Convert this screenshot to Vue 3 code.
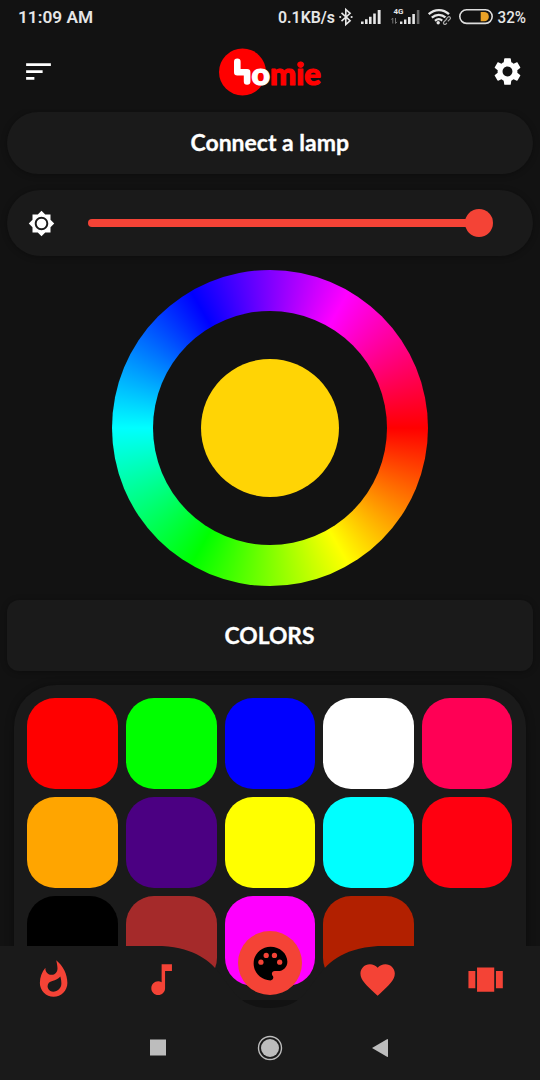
<script setup>
const swatches = [
  '#ff0000', '#00ff00', '#0000ff', '#ffffff', '#ff0055',
  '#ffa500', '#4b0082', '#ffff00', '#00ffff', '#ff0010',
  '#000000', '#a52a2a', '#ff00ff', '#b22000'
]
const tabs = [
  { name: 'hot', d: 'M13.5.67s.74 2.65.74 4.8c0 2.06-1.35 3.73-3.41 3.73-2.07 0-3.63-1.67-3.63-3.73l.03-.36C5.21 7.51 4 10.62 4 14c0 4.42 3.58 8 8 8s8-3.58 8-8C20 8.61 17.41 3.8 13.5.67zM11.71 19c-1.78 0-3.22-1.4-3.22-3.14 0-1.62 1.05-2.76 2.81-3.12 1.77-.36 3.6-1.21 4.62-2.58.39 1.29.59 2.65.59 4.04 0 2.65-2.15 4.8-4.8 4.8z' },
  { name: 'music', d: 'M12 3v10.55c-.59-.34-1.27-.55-2-.55-2.21 0-4 1.79-4 4s1.79 4 4 4 4-1.79 4-4V7h4V3h-6z' },
  { name: 'palette', d: '' },
  { name: 'favorite', d: 'M12 21.35l-1.45-1.32C5.4 15.36 2 12.28 2 8.5 2 5.42 4.42 3 7.5 3c1.74 0 3.41.81 4.5 2.09C13.09 3.81 14.76 3 16.5 3 19.58 3 22 5.42 22 8.5c0 3.78-3.4 6.86-8.55 11.54L12 21.35z' },
  { name: 'carousel', d: 'M7 19h10V5H7v14zm-5-2h4V7H2v10zM18 7v10h4V7h-4z' }
]
</script>

<template>
  <div class="screen">
    <header class="status">
      <svg class="clock" width="80" height="34">
        <text x="0" y="23" textLength="75" lengthAdjust="spacingAndGlyphs">11:09 AM</text>
      </svg>
      <svg class="indicators" width="252" height="34" viewBox="278 0 252 34">
        <text x="278" y="22.500" class="rate" textLength="57" lengthAdjust="spacingAndGlyphs">0.1KB/s</text>
        <path class="line" d="M341.500 12.800l8.600 7.900-4.300 3.800V9.500l4.300 3.800-8.600 7.900" />
        <circle cx="340.200" cy="17" r="1.100" />
        <circle cx="351.600" cy="17" r="1.100" />
        <path d="M361 21.500h2.600V24H361zM365 19.300h2.600V24H365zM369 16.800h2.600V24H369zM373.200 13.500h2.600V24h-2.600zM377.700 10h2.900v14h-2.900z" />
        <text x="393.500" y="14.200" class="tiny" textLength="10" lengthAdjust="spacingAndGlyphs">4G</text>
        <path class="dim" d="M392.800 23.500V18l-1.500 1.600M395.500 18v5.500l1.500-1.600" />
        <path d="M400 21.500h2.400V24H400zM404 19.500h2.400V24H404zM408 17h2.600v7H408zM412.300 14h2.600v10h-2.600z" />
        <path class="off" d="M416.800 10h2.600v14h-2.600z" />
        <path class="wave" d="M428.700 14.200c6-5.500 14.500-5.500 20.300 0M431.800 17.700c4.200-3.800 9.800-3.800 14 0M435 20.800c2.400-2.100 5.100-2.100 7.500 0" />
        <circle cx="438.200" cy="22.700" r="1.700" />
        <path class="halo" d="M444.500 22.500l4-4" />
        <path class="link" d="M445.800 19.300l2.200-2.200c1.400-1.200 3.300.7 2 2.100l-2.200 2.200M447 18.800l-3.200 3.200c-1.200 1.400.7 3.300 2.100 2l1-1" />
        <rect x="459.800" y="9.800" width="32.400" height="13.600" rx="6.800" class="shell" />
        <path class="charge" d="M480.700 12h3.500a4.600 4.600 0 0 1 0 9.300h-3.500z" />
        <text x="497.500" y="23" class="percent" textLength="28.500" lengthAdjust="spacingAndGlyphs">32%</text>
      </svg>
    </header>

    <div class="appbar">
      <svg class="sort" width="33" height="33" viewBox="0 0 24 24"><path d="M3 18h6v-2H3v2zM3 6v2h18V6H3zm0 7h12v-2H3v2z" /></svg>
      <svg class="logo" width="116" height="60" viewBox="212 41.500 116 60">
        <circle cx="242.500" cy="71.500" r="23.500" fill="#f00" />
        <path class="chair" d="M237.300 61.200v10.600h9.800v9.200" />
        <text x="251.500" y="84" class="brand o" textLength="18.500" lengthAdjust="spacingAndGlyphs">o</text>
        <text x="270" y="84" class="brand" textLength="51" lengthAdjust="spacingAndGlyphs">mie</text>
      </svg>
      <svg class="gear" width="33" height="33" viewBox="0 0 24 24"><path d="M19.14 12.94c.04-.3.06-.61.06-.94 0-.32-.02-.64-.07-.94l2.03-1.58c.18-.14.23-.41.12-.61l-1.92-3.32c-.12-.22-.37-.29-.59-.22l-2.39.96c-.5-.38-1.03-.7-1.62-.94l-.36-2.54c-.04-.24-.24-.41-.48-.41h-3.84c-.24 0-.43.17-.47.41l-.36 2.54c-.59.24-1.13.57-1.62.94l-2.39-.96c-.22-.08-.47 0-.59.22L2.740 8.870c-.12.21-.08.47.12.61l2.03 1.58c-.05.3-.09.63-.09.94s.02.64.07.94l-2.03 1.58c-.18.14-.23.41-.12.61l1.92 3.32c.12.22.37.29.59.22l2.39-.96c.5.38 1.03.7 1.62.94l.36 2.54c.05.24.24.41.48.41h3.84c.24 0 .44-.17.47-.41l.36-2.54c.59-.24 1.13-.56 1.62-.94l2.39.96c.22.08.47 0 .59-.22l1.92-3.32c.12-.22.07-.47-.12-.61l-2.01-1.58zM12 15.600c-1.980 0-3.600-1.620-3.600-3.600s1.620-3.600 3.600-3.600 3.600 1.620 3.600 3.600-1.620 3.600-3.600 3.600z" /></svg>
    </div>

    <main>
      <button class="card connect">
        <svg width="172" height="44"><text x="6.500" y="29.500" class="label" textLength="158.500" lengthAdjust="spacingAndGlyphs">Connect a lamp</text></svg>
      </button>
      <section class="card brightness">
        <svg width="27" height="27" viewBox="0 0 24 24"><path d="M20 8.690V4h-4.690L12 .69 8.690 4H4v4.690L.69 12 4 15.310V20h4.690L12 23.310 15.310 20H20v-4.690L23.310 12 20 8.690zM12 18c-3.310 0-6-2.690-6-6s2.690-6 6-6 6 2.690 6 6-2.690 6-6 6zm0-10.300a4.300 4.300 0 0 0 0 8.600 4.300 4.300 0 0 0 0-8.600z" /></svg>
        <div class="track"><div class="thumb"></div></div>
      </section>
      <div class="wheel"><div class="hole"><div class="picked"></div></div></div>
      <h2 class="card heading">
        <svg width="104" height="44"><text x="6.500" y="29.500" class="label" textLength="90" lengthAdjust="spacingAndGlyphs">COLORS</text></svg>
      </h2>
      <section class="panel">
        <div v-for="c in swatches" :key="c" class="swatch" :style="{ background: c }"></div>
      </section>
    </main>

    <nav>
      <svg class="curve" width="540" height="134" viewBox="0 0 540 134">
        <path d="M0 0H162C237.600 5.200 216 62 270 62C324 62 302.400 5.200 378 0H540V134H0Z" />
      </svg>
      <div class="tabs">
        <div v-for="t in tabs" :key="t.name" class="tab">
          <svg v-if="t.d" width="41.250" height="41.250" viewBox="0 0 24 24"><path :d="t.d" /></svg>
        </div>
      </div>
      <div class="fab">
        <svg width="45" height="45" viewBox="0 0 24 24">
          <path d="M12 3c-4.970 0-9 4.030-9 9s4.030 9 9 9c.83 0 1.500-.67 1.500-1.500 0-.39-.15-.74-.39-1.010-.23-.26-.38-.61-.38-.99 0-.83.67-1.500 1.500-1.500H16c2.760 0 5-2.240 5-5 0-4.420-4.030-8-9-8z" />
          <g class="wells">
            <circle cx="6.900" cy="11.300" r="1.400" /><circle cx="9.700" cy="7.700" r="1.400" />
            <circle cx="14.100" cy="7.700" r="1.400" /><circle cx="16.900" cy="11.300" r="1.400" />
          </g>
        </svg>
      </div>
      <div class="system">
        <svg width="26" height="26"><rect x="4" y="4.500" width="16" height="16" /></svg>
        <svg width="26" height="26"><circle cx="13" cy="13" r="11.500" class="ring" /><circle cx="13" cy="13" r="9" /></svg>
        <svg width="26" height="26"><path d="M4 13L19 4.200Q20 3.700 20 4.700V21.300Q20 22.300 19 21.800Z" /></svg>
      </div>
    </nav>
  </div>
</template>

<style>
body { background: #121212; overflow: hidden; }
</style>

<style scoped>
.screen { position: relative; width: 540px; height: 1080px; overflow: hidden; background: #121212; color: #fff; font-family: Roboto, sans-serif; }
svg { display: block; flex: none; fill: #fff; }
.status { display: flex; justify-content: space-between; height: 34px; padding: 0 10px 0 18px; }
.status svg { fill: #e6e6e6; }
.clock text { font-size: 17px; font-weight: 600; }
.rate { font-size: 16px; font-weight: 600; }
.tiny { font-size: 8px; font-weight: 700; }
.percent { font-size: 17px; font-weight: 500; }
.line { fill: none; stroke: #e6e6e6; stroke-width: 1.600; }
.dim { fill: none; stroke: #777; stroke-width: 1; }
.off { fill: #666; }
.wave { fill: none; stroke: #e6e6e6; stroke-width: 2.300; }
.halo { stroke: #121212; stroke-width: 6; stroke-linecap: round; }
.link { fill: none; stroke: #aaa; stroke-width: 1.200; }
.shell { fill: none; stroke: #ddd; stroke-width: 1.600; }
.charge { fill: #e9a227; }
.appbar { display: flex; align-items: center; justify-content: space-between; height: 75px; padding: 0 16.500px 0 22px; }
.logo { margin-left: -6px; }
.chair { fill: none; stroke: #fff; stroke-width: 6.600; stroke-linecap: round; stroke-linejoin: round; }
.brand { font-family: Lato, sans-serif; font-size: 31px; font-weight: 900; fill: #f00; stroke: #f00; stroke-width: 1.200; stroke-linejoin: round; }
.brand.o { fill: #fff; stroke: #fff; }
main { height: 891px; padding: 3px 7px 0; box-sizing: border-box; overflow: hidden; }
.card { display: flex; align-items: center; justify-content: center; box-sizing: border-box; width: 526px; margin: 0; padding: 0; border: 0; background: #1a1a1a; box-shadow: 0 1px 6px rgba(0, 0, 0, .3); }
.connect { height: 62px; border-radius: 31px; }
.label { font-family: Lato, sans-serif; font-size: 22px; font-weight: 700; fill: #fff; stroke: #fff; stroke-width: .3; stroke-linejoin: round; }
.brightness { height: 66px; margin-top: 16px; border-radius: 33px; justify-content: flex-start; padding-left: 21px; gap: 33px; }
.track { display: flex; align-items: center; justify-content: flex-end; width: 405px; height: 8.500px; border-radius: 5px; background: linear-gradient(90deg, #f44336 395px, transparent 395px); }
.thumb { width: 28px; height: 28px; border-radius: 50%; background: #f44336; flex: none; }
.wheel { display: flex; align-items: center; justify-content: center; width: 316px; height: 316px; margin: 13.500px auto 0; border-radius: 50%; background: conic-gradient(from 90deg, #f00, #ff0, #0f0, #0ff, #00f, #f0f, #f00); }
.hole { display: flex; align-items: center; justify-content: center; width: 234px; height: 234px; border-radius: 50%; background: #121212; }
.picked { width: 138px; height: 138px; border-radius: 50%; background: #ffd405; }
.heading { height: 71px; margin-top: 14.500px; border-radius: 12px; }
.panel { display: grid; grid-template-columns: repeat(5, 90.500px); grid-auto-rows: 90.500px; gap: 8.150px; width: 512px; height: 420px; margin: 14px 7px 0; padding: 13.400px 0 0 13.400px; box-sizing: border-box; border-radius: 42px; background: #1a1a1a; box-shadow: 0 1px 9px rgba(0, 0, 0, .4); }
.swatch { border-radius: 28px; }
nav { position: absolute; left: 0; right: 0; bottom: 0; height: 134px; }
.curve { position: absolute; inset: 0; fill: #1a1a1a; }
.tabs { position: relative; display: flex; height: 68px; }
.tab { display: flex; flex: 1; align-items: center; justify-content: center; }
.tab svg { fill: #f44336; }
.fab { position: absolute; left: 238px; top: -15px; display: flex; align-items: center; justify-content: center; width: 64px; height: 64px; border-radius: 50%; background: #f44336; }
.fab svg { fill: #000; }
.wells { fill: #f44336; }
.system { position: relative; display: flex; justify-content: center; gap: 85px; padding-top: 21px; }
.system svg { fill: #bdbdbd; }
.system .ring { fill: none; stroke: #bdbdbd; stroke-width: 1.400; }
</style>
